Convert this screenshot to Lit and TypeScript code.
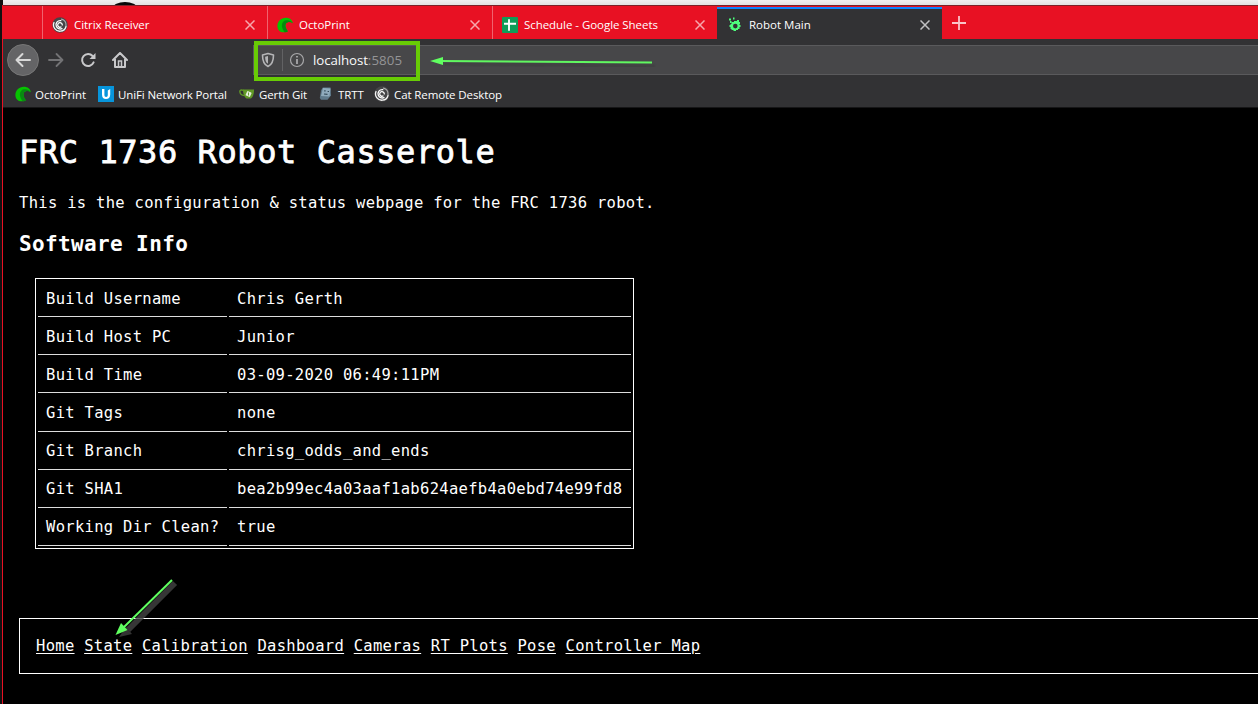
import { LitElement, html, css } from "lit";
import { customElement } from "lit/decorators.js";

const citrix = html`<svg width="16" height="16" viewBox="0 0 16 16"><circle cx="8" cy="8" r="7.700" fill="#454547"/><g fill="none" stroke-linecap="round"><path d="M2 5.500A6.300 6.300 0 0 0 8.500 14.200A6.200 6.200 0 0 0 14 9.500" stroke="#f4f4f4" stroke-width="1.300"/><path d="M14 8.500A6.200 6.200 0 0 0 9.500 2.100" stroke="#aaa" stroke-width="1.100"/><path d="M8.800 3.600A4.200 4.200 0 0 0 4.300 9.300A4.200 4.200 0 0 0 10 11.600" stroke="#fff" stroke-width="1.300"/><path d="M9 10A2.300 2.300 0 1 1 10.300 7.900" stroke="#fff" stroke-width="1.300"/></g></svg>`;
const octo = html`<svg width="16" height="16" viewBox="0 0 16 16"><path d="M.4 9.500C.2 4.500 4 .9 8.800 .8C12.800 .8 15.300 3 15.900 6.300C13.600 4.600 10.500 4.700 9 6.600C7.600 9 9.200 12.500 11 14.200C9 15.500 6 15.700 4 14.900C1.800 13.800 .5 12 .4 9.500Z" fill="#06c300"/><path d="M9 3.200C5.500 3.800 4.300 7.500 5.200 10.500C5.800 12.600 6.500 13.800 7.800 15.300C9 15.100 10.200 14.800 11 14.200C9.200 12.500 7.600 9 9 6.600C10.500 4.700 13.600 4.600 15.900 6.300C14.500 4 12 2.900 9 3.200Z" fill="#078a10"/></svg>`;
const sheets = html`<svg width="16" height="16" viewBox="0 0 16 16"><rect width="16" height="16" rx="1" fill="#0f9d58"/><path d="M7 2.200V13.800M2 6.800H14" stroke="#fff" stroke-width="1.900"/></svg>`;
const robot = html`<svg width="16" height="16" viewBox="0 0 16 16"><path fill-rule="evenodd" fill="#4dff7c" d="M3.500 5H6V4H9V3H11V5H12V7H11.500V8H12.500V10H11.500V12H10V13H8V14H5.500V13H3.500V12H2.500V10H1.500V8H2.500V7H3.500ZM7.300 6.800A2.300 2.300 0 1 0 7.300 11.400A2.300 2.300 0 1 0 7.300 6.800Z"/><path d="M1 1.500H3V3.500H1ZM5 .5H6.500V2.500H5ZM2 4H3.500V6H2Z" fill="#4dff7c"/></svg>`;
const unifi = html`<svg width="16" height="16" viewBox="0 0 16 16"><rect width="16" height="16" fill="#0795dc"/><path d="M4 3V8.500C4 11.500 5.500 13 8 13S12.200 11.500 12.200 8.500V3L9.800 4.600V8.800C9.800 10.400 9.200 11 8.100 11S6.400 10.400 6.400 8.800V3Z" fill="#fff"/></svg>`;
const gitea = html`<svg width="16" height="16" viewBox="0 0 16 16"><path d="M4.500 4.300C2 3.500 .6 4.200 .9 6C1.200 8.300 3 9.400 5.500 9.500" fill="none" stroke="#609926" stroke-width="1.400"/><path d="M4 3.600H15C15.200 8 13.500 12.300 11.500 12.600H7.500C5.500 11.500 4 8 4 3.600Z" fill="#609926"/><rect x="7.200" y="5.600" width="4.800" height="4.800" rx=".8" fill="#e6efdc" transform="rotate(26 9.600 8)"/><path d="M9.500 6.500V9.500" stroke="#609926" stroke-width=".9"/></svg>`;
const cube = html`<svg width="16" height="16" viewBox="0 0 16 16"><path d="M4.800 1.500H12.500L13 9.500L9.500 13.800H3L1.800 12L3 4.500Z" fill="#5f7a8b"/><path d="M5 2L12.500 2.500L11.500 10.500L3 10Z" fill="#8fabbc"/><path d="M6.200 4.800H7.600M9.600 5.500H11M6 8L9.500 8.300" stroke="#344b59" stroke-width="1.200"/></svg>`;
const close = html`<svg class="close" width="10" height="10" viewBox="0 0 10 10"><path d="M.5 .5L9.500 9.500M9.500 .5L.5 9.500" stroke="currentColor" stroke-width="1.500"/></svg>`;

const tabs = [
  { icon: citrix, label: "Citrix Receiver", cls: "" },
  { icon: octo, label: "OctoPrint", cls: "" },
  { icon: sheets, label: "Schedule - Google Sheets", cls: "wide" },
  { icon: robot, label: "Robot Main", cls: "active" },
];
const marks = [
  { icon: octo, label: "OctoPrint", cls: "m1" },
  { icon: unifi, label: "UniFi Network Portal", cls: "m2" },
  { icon: gitea, label: "Gerth Git", cls: "m3" },
  { icon: cube, label: "TRTT", cls: "m4" },
  { icon: citrix, label: "Cat Remote Desktop", cls: "m5" },
];
const rows = [
  ["Build Username", "Chris Gerth"],
  ["Build Host PC", "Junior"],
  ["Build Time", "03-09-2020 06:49:11PM"],
  ["Git Tags", "none"],
  ["Git Branch", "chrisg_odds_and_ends"],
  ["Git SHA1", "bea2b99ec4a03aaf1ab624aefb4a0ebd74e99fd8"],
  ["Working Dir Clean?", "true"],
];
const links = ["Home", "State", "Calibration", "Dashboard", "Cameras", "RT Plots", "Pose", "Controller Map"];

@customElement("app-root")
export class AppRoot extends LitElement {
  static styles = css`
    :host { display: block; position: relative; width: 1258px; height: 704px; overflow: hidden; background: #111; color: #fff; }
    * { box-sizing: border-box; }
    svg { display: block; flex: none; }
    .desk { height: 5px; background: linear-gradient(#f0f0f0, #e2e2e2); border-left: 3px solid #111; display: flex; padding: 2px 0 0 110px; overflow: hidden; }
    .window { margin-left: 2px; height: 699px; border-left: 1px solid #e81123; background: #000; display: flex; flex-direction: column; }
    .tabs { height: 34px; background: #e81123; border-top: 1px solid #7b2228; display: flex; padding-left: 39px; font: 11.5px "Open Sans", sans-serif; flex: none; letter-spacing: -0.05px; }
    .tab { width: 225px; height: 33px; display: flex; align-items: center; padding: 4px 12px 0 9px; border-left: 1px solid #f0626e; }
    .tab.active { background: #323234; border-left: 0; border-top: 2px solid #0a84ff; margin-top: 1px; height: 32px; padding: 1px 12px 0 11px; letter-spacing: 0; }
    .tab .label { margin-left: 6px; flex: 1; white-space: nowrap; }
    .tab.active .label { margin-left: 5px; }
    .close { color: #f7a6ad; }
    .active .close { color: #c0c0c2; }
    .plus { margin: 10px 0 0 10px; }
    .toolbar { height: 42px; background: #323234; display: flex; align-items: center; padding-left: 4px; flex: none; }
    .back { width: 32px; height: 32px; border-radius: 50%; background: #646466; border: 1px solid #777; display: grid; place-items: center; }
    .forward { margin-left: 9px; }
    .tool { margin-left: 16px; }
    .url { margin-left: 125px; flex: 1; height: 30px; background: #474749; border: 1px solid #5a5a5c; border-right: 0; display: flex; align-items: center; padding-left: 7px; font: 13.3px "Open Sans", sans-serif; color: #f9f9fa; letter-spacing: -0.1px; }
    .host { margin-left: 8px; }
    .port { color: #949496; letter-spacing: 0.1px; }
    .divider { width: 1px; height: 22px; background: #626264; margin: 0 6px 0 7px; }
    .marks { height: 27px; background: #323234; display: flex; align-items: center; flex: none; font: 11.5px "Open Sans", sans-serif; padding-left: 12px; border-bottom: 1px solid #161617; }
    .mark { display: flex; align-items: center; gap: 4px; height: 26px; white-space: nowrap; letter-spacing: -0.1px; }
    .m1 { width: 83px; letter-spacing: 0; } .m2 { width: 141px; } .m3 { width: 79px; } .m4 { width: 56px; }
    .page { flex: 1; padding-left: 16px; font: 15.5px/18px "DejaVu Sans Mono", monospace; letter-spacing: 0.3px; }
    h1 { font-size: 32px; line-height: 38px; font-weight: 400; margin: 25px 0 0; letter-spacing: 0.58px; -webkit-text-stroke: 0.8px #fff; }
    p { margin: 23px 0 0; }
    h2 { font-size: 21px; line-height: 24px; margin: 20px 0 0; letter-spacing: 0.37px; }
    table { margin: 22px 0 0 16px; border: 1px solid #fff; border-spacing: 2px; width: 599px; height: 271px; letter-spacing: 0.3px; }
    td { padding: 0 8px; border-bottom: 1px solid #ddd; height: 36px; white-space: nowrap; }
    td:first-child { width: 189px; padding-right: 7px; }
    nav { margin-top: 69px; height: 56px; border: 1px solid #fff; border-right: 0; display: flex; align-items: center; gap: 9.6px; padding-left: 16px; white-space: nowrap; }
    a { color: #fff; text-decoration: underline; text-underline-offset: 2px; }
    .notes { position: absolute; left: 0; top: 0; pointer-events: none; }
  `;
  render() {
    return html`
      <div class="desk"><svg width="26" height="8" viewBox="0 0 26 8"><ellipse cx="12" cy="6" rx="12" ry="6" fill="#080808"/></svg></div>
      <div class="window">
        <div class="tabs">
          ${tabs.map((t) => html`<div class="tab ${t.cls}">${t.icon}<span class="label">${t.label}</span>${close}</div>`)}
          <svg class="plus" width="14" height="14" viewBox="0 0 14 14"><path d="M7 0V14M0 7H14" stroke="#fac4c9" stroke-width="1.800"/></svg>
        </div>
        <div class="toolbar">
          <div class="back"><svg width="16" height="16" viewBox="0 0 16 16"><path d="M15 8H1.500M7.500 2L1.500 8L7.500 14" fill="none" stroke="#d8d8d8" stroke-width="2" stroke-linecap="round" stroke-linejoin="round"/></svg></div>
          <svg class="forward" width="16" height="16" viewBox="0 0 16 16"><path d="M1 8H14.500M8.500 2L14.500 8L8.500 14" fill="none" stroke="#737375" stroke-width="1.800" stroke-linecap="round" stroke-linejoin="round"/></svg>
          <svg class="tool" width="16" height="16" viewBox="0 0 16 16"><path d="M13.600 10.400A6 6 0 1 1 12.600 4" fill="none" stroke="#c8c8ca" stroke-width="2" stroke-linecap="round"/><path d="M15.500 1V7H9.500Z" fill="#c8c8ca"/></svg>
          <svg class="tool" width="16" height="16" viewBox="0 0 16 16"><path d="M1 8L8 1L15 8M3 7V15H13V7" fill="none" stroke="#c8c8ca" stroke-width="2" stroke-linecap="round" stroke-linejoin="round"/><path d="M6.500 14V9H9.500V14" fill="none" stroke="#c8c8ca" stroke-width="1.500"/></svg>
          <div class="url">
            <svg width="14" height="16" viewBox="0 0 14 16"><path d="M7 1.500L12.500 3C12.500 9 11.500 12.500 7 14.500C2.500 12.500 1.500 9 1.500 3Z" fill="none" stroke="#b5b5b7" stroke-width="1.600" stroke-linejoin="round"/><path d="M7 4V11.800C4.800 10.500 4.200 8.500 4.100 4.700Z" fill="#b5b5b7"/></svg>
            <div class="divider"></div>
            <svg width="16" height="16" viewBox="0 0 16 16"><circle cx="8" cy="8" r="6.500" fill="none" stroke="#a8a8aa" stroke-width="1.200"/><path d="M8 7V12M8 4V5.600" stroke="#b5b5b7" stroke-width="1.600"/></svg>
            <span class="host">localhost</span><span class="port">:5805</span>
          </div>
        </div>
        <div class="marks">${marks.map((m) => html`<div class="mark ${m.cls}">${m.icon}<span>${m.label}</span></div>`)}</div>
        <div class="page">
          <h1>FRC 1736 Robot Casserole</h1>
          <p>This is the configuration &amp; status webpage for the FRC 1736 robot.</p>
          <h2>Software Info</h2>
          <table>${rows.map((r) => html`<tr><td>${r[0]}</td><td>${r[1]}</td></tr>`)}</table>
          <nav>${links.map((l) => html`<a>${l}</a>`)}</nav>
        </div>
      </div>
      <svg class="notes" width="1258" height="704" viewBox="0 0 1258 704">
        <defs><filter id="b"><feGaussianBlur stdDeviation="1"/></filter></defs>
        <rect x="256" y="43" width="162" height="36" fill="none" stroke="#68cc05" stroke-width="4"/>
        <path d="M444 64L655 66" stroke="#333" stroke-width="2" opacity=".45" filter="url(#b)"/>
        <path d="M440 61L652 62.500" stroke="#60f860" stroke-width="2"/><path d="M430 61L443 57V65Z" fill="#60ff60"/>
        <path d="M175 583L128 630" stroke="#444" stroke-width="6" opacity=".8"/><path d="M119 637L126 627L132 634Z" fill="#333"/>
        <path d="M172 580L124 627" stroke="#60ff60" stroke-width="2"/><path d="M115.500 635L121 623L127.500 630Z" fill="#60ff60"/>
      </svg>`;
  }
}
